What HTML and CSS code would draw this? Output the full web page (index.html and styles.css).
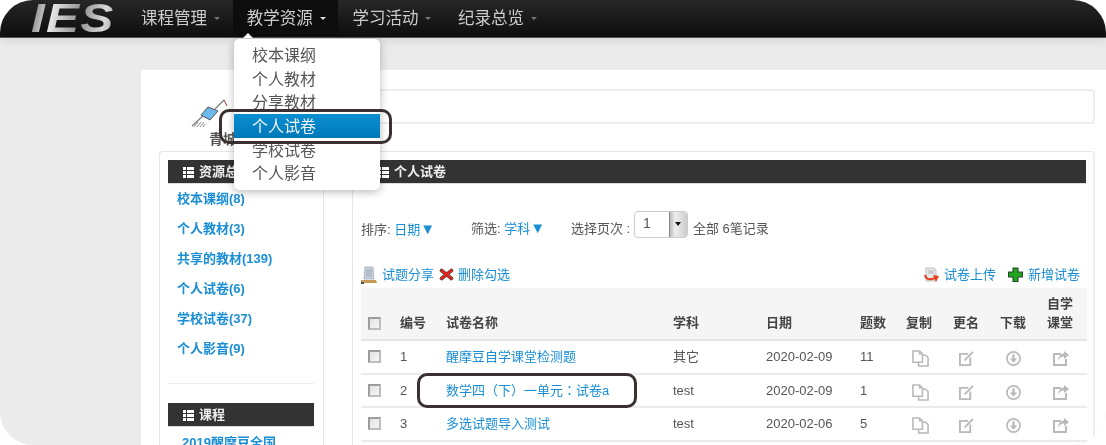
FILE: index.html
```html
<!DOCTYPE html>
<html lang="zh">
<head>
<meta charset="utf-8">
<title>个人试卷</title>
<link rel="stylesheet" href="styles.css">
</head>
<body>
<svg class="defs" width="0" height="0" aria-hidden="true">
  <symbol id="list" viewBox="0 0 11 11"><path fill="#fff" d="M0 0h3v3H0zM4 0h7v3H4zM0 4h3v3H0zM4 4h7v3H4zM0 8h3v3H0zM4 8h7v3H4z"/></symbol>
  <symbol id="copy" viewBox="0 0 18 18"><g fill="none" stroke="#b9b9b9" stroke-width="1.7"><path d="M1 1h7l3 3v9H1z"/><path d="M8 1v3h3"/><path d="M7 13v4h10V8l-2.500-2.500H11"/></g></symbol>
  <symbol id="edit" viewBox="0 0 16 16"><g fill="none" stroke="#b9b9b9" stroke-width="2"><path d="M10 3H1v12h11V7"/><path d="M6 10l9-9"/></g></symbol>
  <symbol id="down" viewBox="0 0 16 16"><circle cx="8" cy="8" r="7" fill="none" stroke="#b9b9b9" stroke-width="1.800"/><path fill="#b9b9b9" d="M6.800 3.500h2.400v4.500H12l-4 4.500L4 8h2.800z"/></symbol>
  <symbol id="share" viewBox="0 0 16 15"><path fill="none" stroke="#b9b9b9" stroke-width="2" d="M8 3H1v11h12V8"/><path fill="#b9b9b9" d="M11 0l5 4-5 4V5.500C8 5.500 6 7 5 10c0-4 2.500-7 6-7.500z"/></symbol>
</svg>
<div class="frame">
  <header class="topbar">
    <div class="logo"><span class="logo-text">IES</span></div>
    <nav class="nav">
      <a class="nav-item">课程管理<i class="caret"></i></a>
      <a class="nav-item is-open">教学资源<i class="caret"></i></a>
      <a class="nav-item">学习活动<i class="caret"></i></a>
      <a class="nav-item">纪录总览<i class="caret"></i></a>
    </nav>
  </header>

  <ul class="dropdown">
    <li>校本课纲</li>
    <li>个人教材</li>
    <li>分享教材</li>
    <li class="is-active">个人试卷</li>
    <li>学校试卷</li>
    <li>个人影音</li>
  </ul>
  <div class="mark mark-menu"></div>
  <div class="mark mark-row"></div>

  <main class="content">
    <div class="brand">
      <div class="brand-logo">
        <svg class="mountain" width="44" height="29" viewBox="0 0 44 29">
          <path fill="none" stroke="#777" stroke-width="1.200" d="M1 27L13 16M24 10L33 1"/>
          <path fill="#6db8ec" stroke="#555" d="M10 16l7-8 10 4-8 9z"/>
          <path fill="none" stroke="#888" d="M3 28l4-5M6 28l4-5M9 28l4-5M12 28l2-3"/>
          <path fill="none" stroke="#a33" d="M33 1l3 6"/>
        </svg>
        <div class="brand-name">青城</div>
      </div>
      <div class="brand-box"></div>
    </div>

    <section class="panel">
      <aside class="side">
        <h3 class="bar"><svg class="bar-icon"><use href="#list"/></svg>资源总览</h3>
        <ul class="side-list">
          <li>校本课纲(8)</li>
          <li>个人教材(3)</li>
          <li>共享的教材(139)</li>
          <li>个人试卷(6)</li>
          <li>学校试卷(37)</li>
          <li>个人影音(9)</li>
        </ul>
        <hr class="side-rule">
        <h3 class="bar"><svg class="bar-icon"><use href="#list"/></svg>课程</h3>
        <div class="side-course">2019醒摩豆全国</div>
      </aside>

      <div class="main">
        <h3 class="bar bar-main"><svg class="bar-icon"><use href="#list"/></svg>个人试卷</h3>

        <div class="filters">
          <span class="f-sort">排序: <a class="link">日期<span class="tri">▼</span></a></span>
          <span class="f-filter">筛选: <a class="link">学科<span class="tri">▼</span></a></span>
          <span class="f-page">选择页次 :</span>
          <span class="select"><span class="select-val">1</span><span class="select-btn"></span></span>
          <span class="f-total">全部 6笔记录</span>
        </div>

        <div class="actions">
          <div class="act-group">
            <a class="link act">
              <svg width="16" height="18" viewBox="0 0 16 18"><path fill="#c9d3df" stroke="#9aa5b1" stroke-width=".7" d="M4 1h8l1 12H3z"/><path stroke="#8d99a6" stroke-width=".7" d="M5 4h6M5 6h6M5 8h6M5 10h6"/><path fill="#c99a55" d="M0 14h15l1 3H0z"/><path fill="#555" d="M0 16h3v2H0z"/></svg>
              试题分享</a>
            <a class="link act act-del">
              <svg width="15" height="13" viewBox="0 0 15 13"><path fill="none" stroke="#4a4a4a" stroke-width="3.600" stroke-linecap="round" d="M2.500 2.500l10 8M12.500 2.500l-10 8"/><path fill="none" stroke="#e1251b" stroke-width="2.400" stroke-linecap="round" d="M2.500 2.500l10 8M12.500 2.500l-10 8"/></svg>
              删除勾选</a>
          </div>
          <div class="act-group">
            <a class="link act act-up">
              <svg width="15" height="16" viewBox="0 0 15 16"><path fill="#e8e8ea" stroke="#aaa" stroke-width=".7" d="M2 1h8l2 2v11H2z"/><path stroke="#999" stroke-width=".7" d="M4 4h6M4 6h6"/><path fill="none" stroke="#e5401f" stroke-width="2" d="M1 8c1 5 5 5 10 3"/><path fill="#e5401f" d="M9 8l6 1-3 6z"/></svg>
              试卷上传</a>
            <a class="link act act-add">
              <svg width="15" height="15" viewBox="0 0 15 15"><path fill="#22a61f" stroke="#24472a" stroke-width="1.100" stroke-linejoin="round" d="M5 1h5v4h4.500v5H10v4.500H5V10H.500V5H5z"/></svg>
              新增试卷</a>
          </div>
        </div>

        <table class="grid">
          <thead>
            <tr>
              <th class="c-check"><span class="check"></span></th>
              <th class="c-no">编号</th>
              <th class="c-name">试卷名称</th>
              <th class="c-subj">学科</th>
              <th class="c-date">日期</th>
              <th class="c-num">题数</th>
              <th class="c-ico">复制</th>
              <th class="c-ico">更名</th>
              <th class="c-ico">下载</th>
              <th class="c-last">自学课堂</th>
            </tr>
          </thead>
          <tbody>
            <tr>
              <td class="c-check"><span class="check"></span></td>
              <td>1</td><td><a class="link">醒摩豆自学课堂检测题</a></td><td>其它</td><td>2020-02-09</td><td>11</td>
              <td class="ico"><svg class="i-copy"><use href="#copy"/></svg></td>
              <td class="ico"><svg class="i-edit"><use href="#edit"/></svg></td>
              <td class="ico"><svg class="i-down"><use href="#down"/></svg></td>
              <td class="ico"><svg class="i-share"><use href="#share"/></svg></td>
            </tr>
            <tr>
              <td class="c-check"><span class="check"></span></td>
              <td>2</td><td><a class="link link-tc" lang="zh-Hant">数学四（下）一单元：试卷a</a></td><td>test</td><td>2020-02-09</td><td>1</td>
              <td class="ico"><svg class="i-copy"><use href="#copy"/></svg></td>
              <td class="ico"><svg class="i-edit"><use href="#edit"/></svg></td>
              <td class="ico"><svg class="i-down"><use href="#down"/></svg></td>
              <td class="ico"><svg class="i-share"><use href="#share"/></svg></td>
            </tr>
            <tr>
              <td class="c-check"><span class="check"></span></td>
              <td>3</td><td><a class="link">多选试题导入测试</a></td><td>test</td><td>2020-02-06</td><td>5</td>
              <td class="ico"><svg class="i-copy"><use href="#copy"/></svg></td>
              <td class="ico"><svg class="i-edit"><use href="#edit"/></svg></td>
              <td class="ico"><svg class="i-down"><use href="#down"/></svg></td>
              <td class="ico"><svg class="i-share"><use href="#share"/></svg></td>
            </tr>
          </tbody>
        </table>
      </div>
    </section>
  </main>
</div>
</body>
</html>
```
FILE: styles.css
```css
* { box-sizing: border-box; }
html, body { margin: 0; padding: 0; height: 445px; overflow: hidden; background: #fff; }
body { font: 13px/1.3 "Liberation Sans", "Noto Sans CJK SC", sans-serif; color: #555; }
.defs { position: absolute; }
h3, ul { margin: 0; padding: 0; }
li { list-style: none; }

.frame {
  position: relative;
  width: 1106px;
  height: 445px;
  overflow: hidden;
  border-radius: 33px;
  background: #ebebeb;
  filter: blur(.4px);
}

/* top bar */
.topbar {
  display: flex;
  height: 38px;
  padding-left: 31px;
  background: linear-gradient(#262626, #0e0e0e);
  border-bottom: 1px solid #555;
  box-shadow: 0 2px 10px rgba(0, 0, 0, .1);
}
.logo { width: 96px; height: 37px; }
.logo-text {
  display: inline-block;
  padding: 0 4px 0 0;
  font: italic 700 40px/37px "Liberation Sans", sans-serif;
  letter-spacing: 1px;
  transform: scaleX(1.24);
  transform-origin: left center;
  background: linear-gradient(100deg, #777 0%, #e6e6e6 25%, #8d8d8d 55%, #d8d8d8 80%, #999 100%);
  -webkit-background-clip: text;
  background-clip: text;
  color: transparent;
}
.nav { display: flex; }
.nav-item {
  display: flex;
  align-items: center;
  width: 105.700px;
  padding-left: 14px;
  font-size: 16.500px;
  color: #ccc;
  white-space: nowrap;
}
.nav-item.is-open { background: #0d0d0d; color: #ccc; }
.caret {
  width: 0; height: 0;
  margin-left: 7px;
  border: 3px solid transparent;
  border-top-color: #777;
  border-bottom: 0;
}
.is-open .caret { border-top-color: #ddd; }

/* dropdown */
.dropdown {
  position: absolute;
  left: 234px;
  top: 39px;
  width: 146px;
  height: 151px;
  padding: 4px 0;
  background: #fff;
  border-radius: 5px;
  box-shadow: 0 2px 8px rgba(0, 0, 0, .28);
  z-index: 5;
}
.dropdown::before {
  content: "";
  position: absolute;
  left: 9px;
  top: -6px;
  border: 5px solid transparent;
  border-bottom-color: #fff;
  border-top: 0;
}
.dropdown li {
  height: 23.700px;
  line-height: 23.700px;
  padding: 1px 0 0 18px;
  font-size: 16px;
  color: #555;
}
.dropdown .is-active { background: linear-gradient(#0a8ed2, #0079b8); color: #f2f2f2; }

.mark {
  position: absolute;
  border: 3px solid #393130;
  border-radius: 10px;
  z-index: 6;
}
.mark-menu { left: 219px; top: 109px; width: 173px; height: 35px; }
.mark-row { left: 417px; top: 373px; width: 220px; height: 35px; }

/* content */
.content {
  margin: 32px 0 0 141px;
  height: 375px;
  padding-top: 19px;
  background: #fff;
}
.brand { display: flex; height: 35px; margin-left: 50px; margin-right: 11px; }
.brand-logo { width: 45px; padding-top: 10px; flex: none; }
.mountain { display: block; }
.brand-name { margin: 3px 0 0 18px; font-size: 14px; font-weight: 700; line-height: 17px; color: #555; white-space: nowrap; }
.brand-box { flex: 1; border: 2px solid #eee; border-radius: 4px; }

.panel {
  position: relative;
  display: flex;
  height: 300px;
  margin: 27px 11px 0 18px;
  padding: 8px 0 0 8px;
  border-top: 1px solid #e6e6e6;
  border-left: 1px solid #e6e6e6;
  border-radius: 4px 4px 0 0;
}
.panel::after {
  content: "";
  position: absolute;
  right: 0;
  top: 0;
  width: 2px;
  height: 284px;
  background: #eee;
}
.bar {
  display: flex;
  align-items: center;
  height: 23px;
  padding: 1px 0 0 15px;
  background: #333;
  color: #eee;
  font-size: 13px;
  font-weight: 700;
  box-shadow: 0 1px 0 #ddd;
}
.bar-icon { width: 11px; height: 11px; margin-right: 5px; }

.side { width: 156px; padding-right: 9px; border-right: 1px solid #e6e6e6; flex: none; }
.side-list { padding: 1px 0 19px; }
.side-list li {
  height: 30px;
  line-height: 30px;
  padding-left: 9px;
  font-weight: 700;
  color: #1b8fd6;
  white-space: nowrap;
}
.side-rule { margin: 0 0 19px; border: 0; border-top: 1px solid #eee; height: 1px; }
.side-course { padding: 9px 0 0 14px; font-weight: 700; color: #1b8fd6; white-space: nowrap; }

.main { width: 735px; margin-left: 28px; padding-left: 8px; border-left: 1px solid #e6e6e6; flex: none; }
.bar-main { margin-right: 1px; padding-left: 17px; }
.link { color: #1b8fd6; }
.link-tc { font-family: "Liberation Sans", "Noto Sans CJK TC", sans-serif; }
.tri { font-size: 15px; line-height: 1; }

.filters { display: flex; align-items: center; height: 27px; margin-top: 28px; }
.f-sort { width: 110px; padding-top: 10px; }
.f-filter { width: 100px; padding-top: 8px; }
.f-page { width: 63px; padding-top: 10px; }
.select {
  display: flex;
  width: 54px;
  height: 27px;
  border: 1px solid #ccc;
  border-radius: 4px;
  overflow: hidden;
  background: #fff;
}
.select-val { flex: 1; padding-left: 8px; line-height: 23px; font-size: 14px; }
.select-btn {
  position: relative;
  width: 18px;
  background: linear-gradient(90deg, #bbb, #eee 30%, #ccc);
  border-left: 1px solid #888;
}
.select-btn::after {
  content: "";
  position: absolute;
  left: 5px;
  top: 10px;
  border: 3.500px solid transparent;
  border-top: 4px solid #111;
  border-bottom: 0;
}
.f-total { margin-left: 5px; padding-top: 10px; }

.actions { display: flex; justify-content: space-between; align-items: center; width: 719px; height: 20px; margin-top: 26px; }
.act-group { display: flex; align-items: center; }
.act { display: flex; align-items: center; white-space: nowrap; gap: 5px; padding-top: 2px; }
.act-del { margin-left: 5px; gap: 4px; }
.act-add { margin-left: 12px; }

.grid {
  width: 726px;
  margin-top: 4px;
  border-collapse: separate;
  border-spacing: 0;
  table-layout: fixed;
}
.grid th, .grid td { padding: 0 0 0 8px; text-align: left; }
.grid th {
  height: 53px;
  padding-bottom: 7px;
  vertical-align: bottom;
  line-height: 19px;
  background: #f5f5f5;
  color: #444;
  font-weight: 700;
  border-bottom: 2px solid #e4e4e4;
}
.grid th.c-check { padding-bottom: 9px; }
.grid td { height: 33.500px; padding-top: 2px; border-bottom: 2px solid #ebebeb; vertical-align: middle; }
.grid .c-check { width: 31px; padding-left: 7px; }
.grid td.c-check { padding-top: 0; }
.c-no { width: 46px; }
.c-name { width: 227px; }
.c-subj { width: 93px; }
.c-date { width: 94px; }
.c-num { width: 46px; }
.c-ico { width: 47px; }
.grid .c-last { width: 48px; padding-right: 8px; }
.check {
  display: block;
  width: 13px;
  height: 13px;
  border: 2px solid #a8a8a8;
  border-color: #9c9c9c #bdbdbd #bdbdbd #9c9c9c;
  background: linear-gradient(135deg, #e2e2e2, #f6f6f6);
}
.grid .ico { padding: 4px 0 0 14px; line-height: 0; }
.i-copy { width: 17px; height: 17px; }
.i-edit, .i-down { width: 15px; height: 15px; }
.i-share { width: 16px; height: 15px; }
```
